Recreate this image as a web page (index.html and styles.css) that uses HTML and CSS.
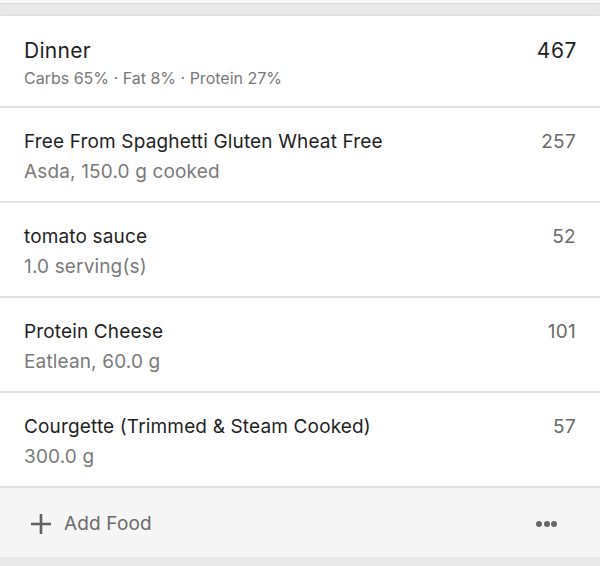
FILE: index.html
```html
<!DOCTYPE html>
<html lang="en">
<head>
    <meta charset="UTF-8">
    <meta name="viewport" content="width=device-width, initial-scale=1.0">
    <title>Dinner</title>
    <link rel="stylesheet" href="styles.css">
</head>
<body>
    <div class="prev-card"></div>

    <div class="meal-card">
        <div class="meal-header">
            <div class="meal-info">
                <div class="meal-name">Dinner</div>
                <div class="meal-macros">Carbs 65% · Fat 8% · Protein 27%</div>
            </div>
            <div class="meal-total">467</div>
        </div>

        <div class="food-row">
            <div class="food-info">
                <div class="food-name">Free From Spaghetti Gluten Wheat Free</div>
                <div class="food-detail">Asda, 150.0 g cooked</div>
            </div>
            <div class="food-cals">257</div>
        </div>

        <div class="food-row">
            <div class="food-info">
                <div class="food-name">tomato sauce</div>
                <div class="food-detail">1.0 serving(s)</div>
            </div>
            <div class="food-cals">52</div>
        </div>

        <div class="food-row">
            <div class="food-info">
                <div class="food-name">Protein Cheese</div>
                <div class="food-detail">Eatlean, 60.0 g</div>
            </div>
            <div class="food-cals">101</div>
        </div>

        <div class="food-row">
            <div class="food-info">
                <div class="food-name">Courgette (Trimmed &amp; Steam Cooked)</div>
                <div class="food-detail">300.0 g</div>
            </div>
            <div class="food-cals">57</div>
        </div>

        <div class="meal-footer">
            <div class="add-food">
                <svg class="plus-icon" width="22" height="22" viewBox="0 0 22 22">
                    <path d="M11 1v20M1 11h20" stroke="#626262" stroke-width="2.6" fill="none"/>
                </svg>
                <span>Add Food</span>
            </div>
            <div class="more-dots">
                <span></span><span></span><span></span>
            </div>
        </div>
    </div>
</body>
</html>
```

FILE: styles.css
```css
/* Page */
body {
    margin: 0;
    background: #e9e9e9;
    font-family: Inter, "Noto Sans", sans-serif;
    color: #222;
}
.prev-card {
    height: 3px;
    background: #f7f7f7;
    border-bottom: 1px solid #dcdcdc;
    margin-bottom: 11px;
}

/* Card */
.meal-card {
    background: #fff;
    border-top: 1px solid #e0e0e0;
    box-shadow: 0 2px 3px rgba(0, 0, 0, 0.18);
}

.meal-header {
    display: flex;
    justify-content: space-between;
    align-items: flex-start;
    padding: 22px 23px 0 24px;
    height: 68px;
    border-bottom: 2px solid #e2e2e2;
}
.meal-name {
    font-size: 21px;
    line-height: 26px;
    letter-spacing: 0.3px;
    color: #1f1f1f;
}
.meal-macros {
    font-size: 16px;
    line-height: 20px;
    margin-top: 4px;
    color: #787878;
}
.meal-total {
    font-size: 21px;
    line-height: 26px;
    letter-spacing: 0.6px;
    color: #1f1f1f;
}

/* Food rows */
.food-row {
    display: flex;
    justify-content: space-between;
    align-items: flex-start;
    padding: 21px 24px 0 24px;
    height: 72px;
    border-bottom: 2px solid #e2e2e2;
}
.food-name {
    font-size: 19px;
    line-height: 26px;
    letter-spacing: 0.15px;
    color: #1f1f1f;
}
.food-detail {
    font-size: 19px;
    line-height: 26px;
    letter-spacing: 0.15px;
    margin-top: 4px;
    color: #7a7a7a;
}
.food-cals {
    font-size: 19px;
    line-height: 26px;
    letter-spacing: 0.3px;
    color: #6a6a6a;
}

/* Footer */
.meal-footer {
    display: flex;
    justify-content: space-between;
    align-items: center;
    height: 67px;
    padding: 2px 24px 0 30px;
    background: #f5f5f5;
}
.add-food {
    display: flex;
    align-items: center;
    gap: 12px;
    font-size: 19px;
    letter-spacing: 0.15px;
    color: #6a6a6a;
}
.more-dots {
    display: flex;
    gap: 1.5px;
    margin-right: 19px;
}
.more-dots span {
    width: 6px;
    height: 6px;
    border-radius: 50%;
    background: #666;
}
```
